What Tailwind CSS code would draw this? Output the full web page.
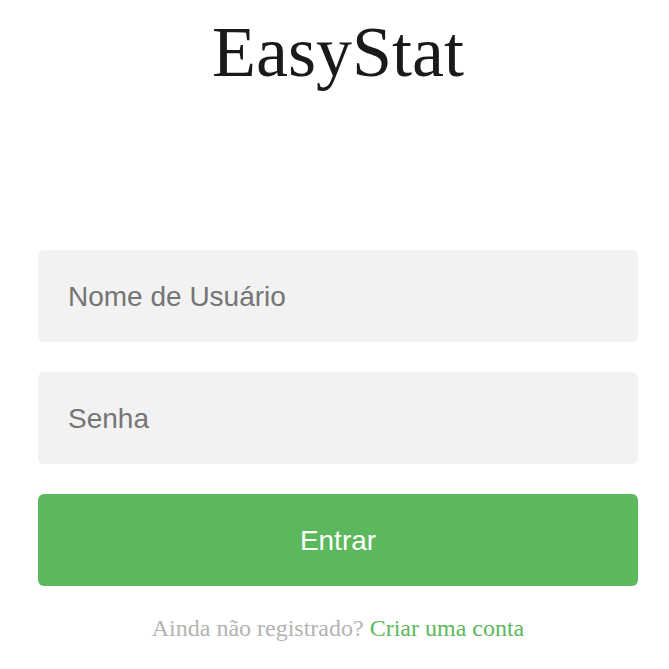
<!DOCTYPE html>
<html lang="pt-BR">
<head>
<meta charset="utf-8">
<meta name="viewport" content="width=device-width, initial-scale=1">
<title>EasyStat</title>
<script src="https://cdn.jsdelivr.net/npm/@tailwindcss/browser@4"></script>
</head>
<body class="bg-white pt-4 pr-[31px] pl-[38px]">
<main class="mx-auto max-w-[600px]">
<h1 class="text-center font-['Liberation_Serif',serif] text-[72px] leading-[72px] text-[#1a1a1a]">EasyStat</h1>
<form class="mt-[162px] flex flex-col gap-[30px] font-['Liberation_Sans',sans-serif] text-[28px] leading-8">
<input type="text" aria-label="Nome de Usuário" placeholder="Nome de Usuário" class="w-full rounded-md bg-[#f2f2f2] px-[30px] pt-[31px] pb-[29px] placeholder:text-[#757575] outline-none">
<input type="password" aria-label="Senha" placeholder="Senha" class="w-full rounded-md bg-[#f2f2f2] px-[30px] pt-[31px] pb-[29px] placeholder:text-[#757575] outline-none">
<button type="submit" class="w-full rounded-md bg-[#5cb85c] px-[30px] pt-[31px] pb-[29px] text-white">Entrar</button>
</form>
<p class="mt-7 text-center font-['Liberation_Serif',serif] text-2xl leading-7 text-[#b3b3b3]">Ainda não registrado? <a href="#" class="text-[#5cb85c]">Criar uma conta</a></p>
</main>
</body>
</html>
